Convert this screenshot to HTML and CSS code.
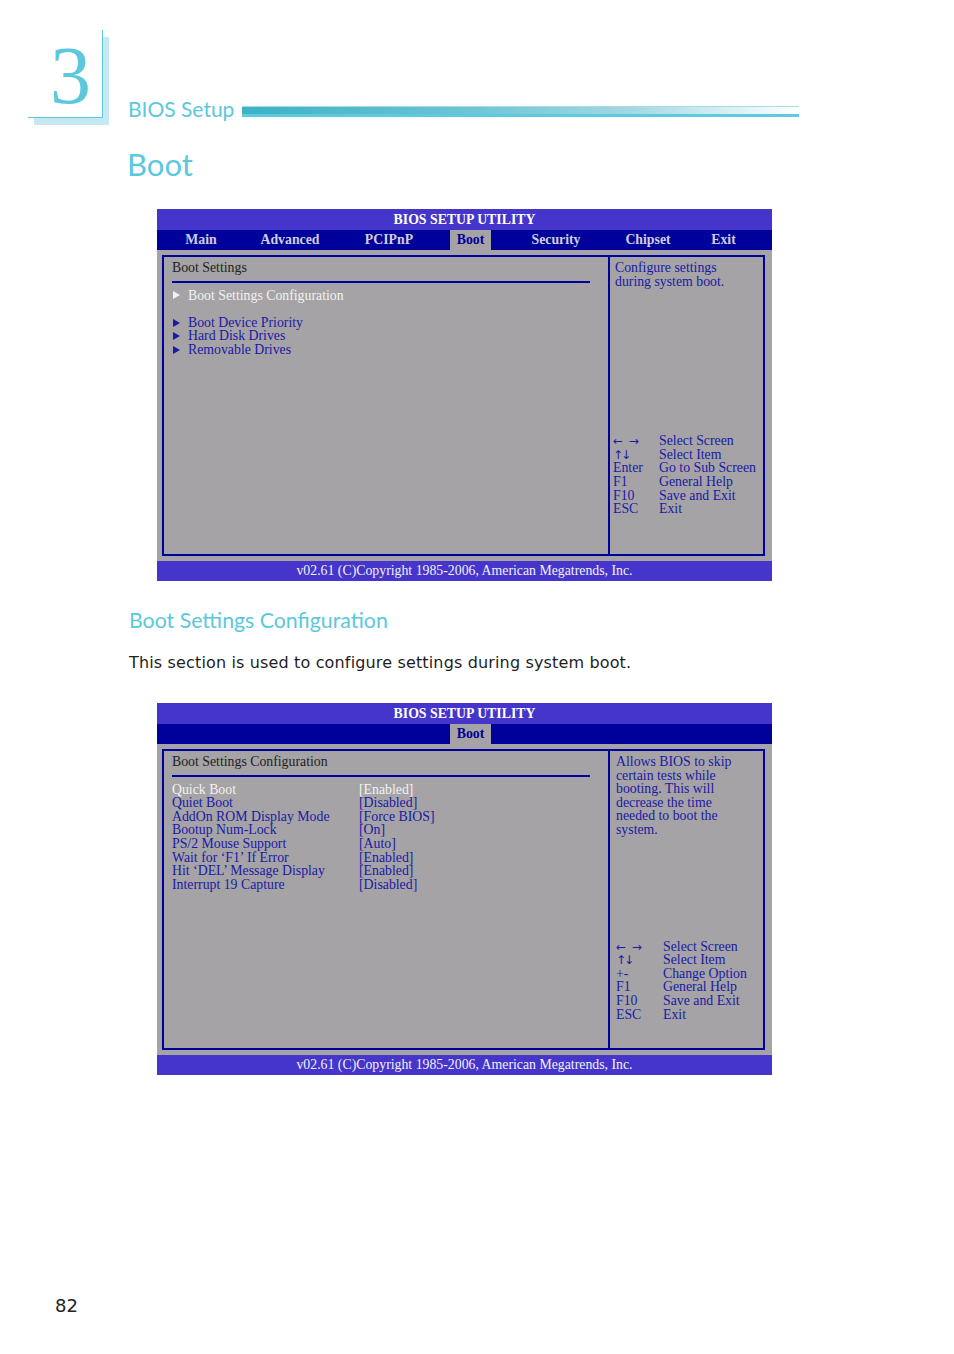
FILE: index.html
```html
<!DOCTYPE html>
<html>
<head>
<meta charset="utf-8">
<link rel="stylesheet" href="styles.css">
</head>
<body>
<div class="page">
  <header class="chapter">
    <div class="chapnum"><span class="digit">3</span></div>
    <div class="chaptitle">BIOS Setup</div>
    <div class="chapbar"></div>
  </header>

  <h1 class="title-boot">Boot</h1>

  <div class="bios">
    <div class="bios-title">BIOS SETUP UTILITY</div>
    <div class="tabs tabs-full">
      <div class="tab">Main</div>
      <div class="tab">Advanced</div>
      <div class="tab tab-pci">PCIPnP</div>
      <div class="tab tab-active">Boot</div>
      <div class="tab">Security</div>
      <div class="tab">Chipset</div>
      <div class="tab">Exit</div>
    </div>
    <div class="bios-body">
      <div class="frame">
        <div class="left">
          <div class="line hdr">Boot Settings</div>
          <div class="rule"></div>
          <div class="line item white"><span class="tri"></span>Boot Settings Configuration</div>
          <div class="group">
            <div class="line item"><span class="tri"></span>Boot Device Priority</div>
            <div class="line item"><span class="tri"></span>Hard Disk Drives</div>
            <div class="line item"><span class="tri"></span>Removable Drives</div>
          </div>
        </div>
        <div class="right r1">
          <div class="help">
            <div class="line">Configure settings</div>
            <div class="line">during system boot.</div>
          </div>
          <div class="keys keys1">
            <div class="line"><span class="arr">← →</span></div><div class="line">Select Screen</div>
            <div class="line"><span class="arr arr-v">↑↓</span></div><div class="line">Select Item</div>
            <div class="line">Enter</div><div class="line">Go to Sub Screen</div>
            <div class="line">F1</div><div class="line">General Help</div>
            <div class="line">F10</div><div class="line">Save and Exit</div>
            <div class="line">ESC</div><div class="line">Exit</div>
          </div>
        </div>
      </div>
    </div>
    <div class="bios-foot">v02.61 (C)Copyright 1985-2006, American Megatrends, Inc.</div>
  </div>

  <h2 class="section">Boot Settings Configuration</h2>
  <p class="para">This section is used to configure settings during system boot.</p>

  <div class="bios">
    <div class="bios-title">BIOS SETUP UTILITY</div>
    <div class="tabs tabs-single">
      <div class="tab tab-active">Boot</div>
    </div>
    <div class="bios-body">
      <div class="frame">
        <div class="left">
          <div class="line hdr">Boot Settings Configuration</div>
          <div class="rule"></div>
          <div class="settings">
            <div class="line white">Quick Boot</div><div class="line white">[Enabled]</div>
            <div class="line">Quiet Boot</div><div class="line">[Disabled]</div>
            <div class="line">AddOn ROM Display Mode</div><div class="line">[Force BIOS]</div>
            <div class="line">Bootup Num-Lock</div><div class="line">[On]</div>
            <div class="line">PS/2 Mouse Support</div><div class="line">[Auto]</div>
            <div class="line">Wait for ‘F1’ If Error</div><div class="line">[Enabled]</div>
            <div class="line">Hit ‘DEL’ Message Display</div><div class="line">[Enabled]</div>
            <div class="line">Interrupt 19 Capture</div><div class="line">[Disabled]</div>
          </div>
        </div>
        <div class="right r2">
          <div class="help">
            <div class="line">Allows BIOS to skip</div>
            <div class="line">certain tests while</div>
            <div class="line">booting. This will</div>
            <div class="line">decrease the time</div>
            <div class="line">needed to boot the</div>
            <div class="line">system.</div>
          </div>
          <div class="keys keys2">
            <div class="line"><span class="arr">← →</span></div><div class="line">Select Screen</div>
            <div class="line"><span class="arr arr-v">↑↓</span></div><div class="line">Select Item</div>
            <div class="line">+-</div><div class="line">Change Option</div>
            <div class="line">F1</div><div class="line">General Help</div>
            <div class="line">F10</div><div class="line">Save and Exit</div>
            <div class="line">ESC</div><div class="line">Exit</div>
          </div>
        </div>
      </div>
    </div>
    <div class="bios-foot">v02.61 (C)Copyright 1985-2006, American Megatrends, Inc.</div>
  </div>

  <div class="pagenum">82</div>
</div>
</body>
</html>
```

FILE: styles.css
```css
html, body {
  margin: 0;
  padding: 0;
  background: #ffffff;
}

.page {
  width: 954px;
  height: 1354px;
  overflow: hidden;
  font-family: "Liberation Serif", "Times New Roman", serif;
}

/* ---------- chapter header ---------- */
.chapter {
  display: flex;
  align-items: flex-start;
  padding: 30px 0 0 28px;
  height: 92px;
}

.chapnum {
  width: 75px;
  height: 88px;
  box-sizing: border-box;
  border-right: 1px solid #5bc8dd;
  border-bottom: 1px solid #5bc8dd;
  background: #ffffff;
  box-shadow: 6px 7px 0 #c4e9f2;
  padding: 5px 0 0 22px;
}

.digit {
  display: block;
  font-family: "Liberation Serif", serif;
  font-size: 82px;
  line-height: 82px;
  color: #5bc8dd;
}

.chaptitle {
  margin: 66px 0 0 25px;
  font-family: Lato, "Open Sans", sans-serif;
  font-size: 21px;
  line-height: 26px;
  color: #5bc8dd;
}

.chapbar {
  margin: 76px 0 0 8px;
  width: 557px;
  height: 7px;
  background: linear-gradient(to right, #3cb2c4 0%, #6cc4d4 40%, #a4d8e4 70%, #ffffff 100%);
  border-top: 1px solid #a8dde8;
  border-bottom: 3px solid #5ccbe0;
}

.title-boot {
  margin: 24px 0 0 127px;
  font-family: Lato, "Open Sans", sans-serif;
  font-weight: 400;
  font-size: 31px;
  line-height: 36px;
  color: #5bc8dd;
}

/* ---------- BIOS screen ---------- */
.bios {
  margin: 27px 0 0 157px;
  width: 615px;
  font-family: "Liberation Serif", "Times New Roman", serif;
  font-size: 13.8px;
}

.bios-title {
  height: 21px;
  line-height: 21px;
  background: #4535cb;
  color: #ffffff;
  font-weight: bold;
  text-align: center;
}

.tabs {
  height: 20px;
  background: #00009a;
  display: grid;
}

.tabs-full {
  grid-template-columns: 88px 90px 115px 41px 130px 54px 97px;
}

.tabs-single {
  grid-template-columns: 293px 41px;
}

.tabs-single .tab-active {
  grid-column: 2;
}

.tab {
  line-height: 20px;
  text-align: center;
  font-weight: bold;
  color: #cfcfe0;
  white-space: nowrap;
}

.tab-pci {
  padding-right: 7px;
}

.tab-active {
  background: #a5a3a5;
  color: #00009a;
}

.bios-body {
  background: #a5a3a5;
  padding: 5px 7px 5px 5px;
}

.frame {
  height: 301px;
  box-sizing: border-box;
  border: 2px solid #0000a0;
  display: grid;
  grid-template-columns: 446px 1fr;
}

.line {
  line-height: 13.6px;
  height: 13.6px;
  white-space: nowrap;
}

.left {
  border-right: 2px solid #0000a0;
  padding: 4px 18px 0 8px;
  color: #1a1aa6;
}

.hdr {
  color: #222222;
}

.rule {
  height: 2px;
  background: #0000a0;
  margin: 6px 0 6px 0;
}

.white {
  color: #f2f2f2;
}

.item {
  display: flex;
  align-items: center;
}

.tri {
  width: 0;
  height: 0;
  margin: 0 8px 0 1px;
  border-left: 7px solid currentColor;
  border-top: 4px solid transparent;
  border-bottom: 4px solid transparent;
}

.group {
  margin-top: 13.6px;
}

.settings {
  display: grid;
  grid-template-columns: 187px auto;
}

.right {
  padding: 4px 0 0 5px;
  color: #1a1aa6;
}

.r2 {
  padding-left: 6px;
}

.keys {
  display: grid;
}

.keys1 {
  margin-top: 146px;
  margin-left: -2px;
  grid-template-columns: 46px auto;
}

.keys2 {
  margin-top: 103px;
  margin-left: 0;
  grid-template-columns: 47px auto;
}

.arr {
  font-family: "DejaVu Sans", sans-serif;
  font-size: 12px;
  letter-spacing: 1px;
}

.arr-v {
  letter-spacing: -2px;
}

.bios-foot {
  height: 20px;
  line-height: 20px;
  background: #4535cb;
  color: #f2f2f2;
  text-align: center;
}

/* ---------- text ---------- */
.section {
  margin: 26px 0 0 129px;
  font-family: Lato, "Open Sans", sans-serif;
  font-weight: 400;
  font-size: 21.3px;
  line-height: 26px;
  color: #5bc8dd;
}

.para {
  margin: 20px 0 0 129px;
  font-family: "DejaVu Sans", Verdana, sans-serif;
  font-size: 16px;
  letter-spacing: 0.15px;
  line-height: 20px;
  color: #1e1e1e;
}

.para + .bios {
  margin-top: 30px;
}

.pagenum {
  margin: 220px 0 0 55px;
  font-family: "DejaVu Sans", Verdana, sans-serif;
  font-size: 18px;
  line-height: 22px;
  color: #222222;
}
```
